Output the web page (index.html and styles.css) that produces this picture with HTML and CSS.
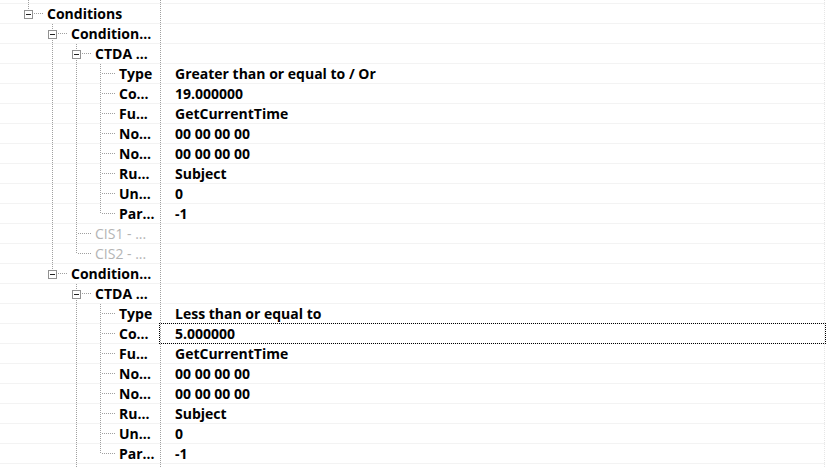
FILE: index.html
```html
<!DOCTYPE html>
<html lang="en">
<head>
  <meta charset="UTF-8" />
  <title>Conditions</title>
  <link rel="stylesheet" href="styles.css">
</head>
<body>

<div class="tree">
  <!-- partial row above the first visible node -->
  <div class="row top">
    <div class="name"><span class="pad"></span><span class="g v"></span></div>
    <div class="val"></div>
  </div>

  <div class="row">
    <div class="name"><span class="pad"></span><span class="e end"><i class="box"></i></span><span class="label">Conditions</span></div>
    <div class="val"></div>
  </div>

  <div class="row">
    <div class="name"><span class="pad"></span><span class="g"></span><span class="e"><i class="box"></i></span><span class="label">Condition...</span></div>
    <div class="val"></div>
  </div>
  <div class="row">
    <div class="name"><span class="pad"></span><span class="g"></span><span class="g v"></span><span class="e"><i class="box"></i></span><span class="label">CTDA ...</span></div>
    <div class="val"></div>
  </div>
  <div class="row">
    <div class="name"><span class="pad"></span><span class="g"></span><span class="g v"></span><span class="g v"></span><span class="e"></span><span class="label">Type</span></div>
    <div class="val">Greater than or equal to / Or</div>
  </div>
  <div class="row">
    <div class="name"><span class="pad"></span><span class="g"></span><span class="g v"></span><span class="g v"></span><span class="e"></span><span class="label">Co...</span></div>
    <div class="val">19.000000</div>
  </div>
  <div class="row">
    <div class="name"><span class="pad"></span><span class="g"></span><span class="g v"></span><span class="g v"></span><span class="e"></span><span class="label">Fu...</span></div>
    <div class="val">GetCurrentTime</div>
  </div>
  <div class="row">
    <div class="name"><span class="pad"></span><span class="g"></span><span class="g v"></span><span class="g v"></span><span class="e"></span><span class="label">No...</span></div>
    <div class="val">00 00 00 00</div>
  </div>
  <div class="row">
    <div class="name"><span class="pad"></span><span class="g"></span><span class="g v"></span><span class="g v"></span><span class="e"></span><span class="label">No...</span></div>
    <div class="val">00 00 00 00</div>
  </div>
  <div class="row">
    <div class="name"><span class="pad"></span><span class="g"></span><span class="g v"></span><span class="g v"></span><span class="e"></span><span class="label">Ru...</span></div>
    <div class="val">Subject</div>
  </div>
  <div class="row">
    <div class="name"><span class="pad"></span><span class="g"></span><span class="g v"></span><span class="g v"></span><span class="e"></span><span class="label">Un...</span></div>
    <div class="val">0</div>
  </div>
  <div class="row">
    <div class="name"><span class="pad"></span><span class="g"></span><span class="g v"></span><span class="g v"></span><span class="e end"></span><span class="label">Par...</span></div>
    <div class="val">-1</div>
  </div>
  <div class="row">
    <div class="name"><span class="pad"></span><span class="g"></span><span class="g v"></span><span class="e"></span><span class="label muted">CIS1 - ...</span></div>
    <div class="val"></div>
  </div>
  <div class="row">
    <div class="name"><span class="pad"></span><span class="g"></span><span class="g v"></span><span class="e end"></span><span class="label muted">CIS2 - ...</span></div>
    <div class="val"></div>
  </div>

  <div class="row">
    <div class="name"><span class="pad"></span><span class="g"></span><span class="e end"><i class="box"></i></span><span class="label">Condition...</span></div>
    <div class="val"></div>
  </div>
  <div class="row">
    <div class="name"><span class="pad"></span><span class="g"></span><span class="g"></span><span class="e"><i class="box"></i></span><span class="label">CTDA ...</span></div>
    <div class="val"></div>
  </div>
  <div class="row">
    <div class="name"><span class="pad"></span><span class="g"></span><span class="g"></span><span class="g v"></span><span class="e"></span><span class="label">Type</span></div>
    <div class="val">Less than or equal to</div>
  </div>
  <div class="row">
    <div class="name"><span class="pad"></span><span class="g"></span><span class="g"></span><span class="g v"></span><span class="e"></span><span class="label">Co...</span></div>
    <div class="val focus">5.000000</div>
  </div>
  <div class="row">
    <div class="name"><span class="pad"></span><span class="g"></span><span class="g"></span><span class="g v"></span><span class="e"></span><span class="label">Fu...</span></div>
    <div class="val">GetCurrentTime</div>
  </div>
  <div class="row">
    <div class="name"><span class="pad"></span><span class="g"></span><span class="g"></span><span class="g v"></span><span class="e"></span><span class="label">No...</span></div>
    <div class="val">00 00 00 00</div>
  </div>
  <div class="row">
    <div class="name"><span class="pad"></span><span class="g"></span><span class="g"></span><span class="g v"></span><span class="e"></span><span class="label">No...</span></div>
    <div class="val">00 00 00 00</div>
  </div>
  <div class="row">
    <div class="name"><span class="pad"></span><span class="g"></span><span class="g"></span><span class="g v"></span><span class="e"></span><span class="label">Ru...</span></div>
    <div class="val">Subject</div>
  </div>
  <div class="row">
    <div class="name"><span class="pad"></span><span class="g"></span><span class="g"></span><span class="g v"></span><span class="e"></span><span class="label">Un...</span></div>
    <div class="val">0</div>
  </div>
  <div class="row">
    <div class="name"><span class="pad"></span><span class="g"></span><span class="g"></span><span class="g v"></span><span class="e end"></span><span class="label">Par...</span></div>
    <div class="val">-1</div>
  </div>
  <!-- next sibling, below the visible area -->
  <div class="row">
    <div class="name"><span class="pad"></span><span class="g"></span><span class="g"></span><span class="g v"></span></div>
    <div class="val"></div>
  </div>
</div>

</body>
</html>
```

FILE: styles.css
```css
html, body {
  margin: 0;
  padding: 0;
  background: #fff;
  overflow: hidden;
}

.tree {
  width: 825px;
  font-family: 'Open Sans', 'Noto Sans', sans-serif;
  font-size: 14px;
  font-weight: bold;
  color: #000;
}

.row {
  display: flex;
  height: 19px;
  border-bottom: 1px solid #f3f3f3;
}

.row.top {
  height: 3px;
}

.name {
  width: 160px;
  flex: none;
  display: flex;
  align-items: stretch;
  overflow: hidden;
  white-space: nowrap;
}

.pad {
  width: 16px;
  flex: none;
}

/* indent guide, dotted line in the middle when the branch goes on */
.g {
  width: 24px;
  flex: none;
}

.g.v {
  background: repeating-linear-gradient(to bottom, #a0a0a0 0 1px, transparent 1px 2px) 12px 0 / 1px 100% no-repeat;
}

/* elbow: vertical + horizontal connector */
.e {
  width: 27px;
  flex: none;
  display: flex;
  align-items: center;
  background:
    repeating-linear-gradient(to right, #a0a0a0 0 1px, transparent 1px 2px) 14px 9px / 13px 1px no-repeat,
    repeating-linear-gradient(to bottom, #a0a0a0 0 1px, transparent 1px 2px) 12px 0 / 1px 100% no-repeat;
}

.e.end {
  background:
    repeating-linear-gradient(to right, #a0a0a0 0 1px, transparent 1px 2px) 14px 9px / 13px 1px no-repeat,
    repeating-linear-gradient(to bottom, #a0a0a0 0 1px, transparent 1px 2px) 12px 0 / 1px 10px no-repeat;
}

.box {
  width: 9px;
  height: 9px;
  box-sizing: border-box;
  margin-left: 8px;
  margin-top: 1px;
  border: 1px solid #919191;
  background: linear-gradient(#222, #222) center / 5px 1px no-repeat, #fff;
}

.label {
  padding-left: 4px;
  line-height: 19px;
}

.label.muted {
  color: #b4b4b4;
  font-weight: normal;
}

.val {
  flex: 1;
  padding-left: 14px;
  line-height: 19px;
  white-space: nowrap;
  border-left: 1px dotted #a0a0a0;
  border-right: 1px dotted #e6e6e6;
}

.val.focus {
  outline: 1px dotted #000;
  outline-offset: 0;
}
```
